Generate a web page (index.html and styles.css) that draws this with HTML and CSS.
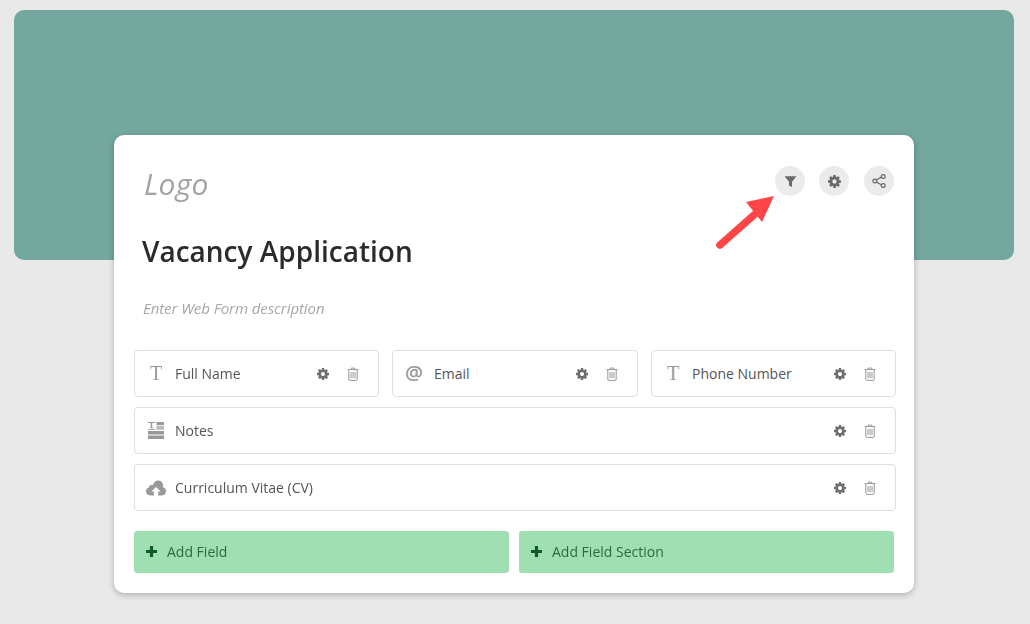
FILE: index.html
```html
<!DOCTYPE html>
<html lang="en">
<head>
<meta charset="utf-8">
<title>Vacancy Application</title>
<link rel="stylesheet" href="styles.css">
</head>
<body>
<svg class="defs" width="0" height="0" aria-hidden="true">
  <symbol id="cog" viewBox="0 0 1792 1792"><path d="M1152 896q0-106-75-181t-181-75-181 75-75 181 75 181 181 75 181-75 75-181zm512-109v222q0 12-8 23t-20 13l-185 28q-19 54-39 91 35 50 107 138 10 12 10 25t-9 23q-27 37-99 108t-94 71q-12 0-26-9l-138-108q-44 23-91 38-16 136-29 186-7 28-36 28h-222q-14 0-24.500-8.500t-11.500-21.500l-28-184q-49-16-90-37l-141 107q-10 9-25 9-14 0-25-11-126-114-165-168-7-10-7-23 0-12 8-23 15-21 51-66.500t54-70.500q-27-50-41-99l-183-27q-13-2-21-12.500t-8-23.500v-222q0-12 8-23t19-13l186-28q14-46 39-92-40-57-107-138-10-12-10-24 0-10 9-23 26-36 98.500-107.500t94.500-71.500q13 0 26 10l138 107q44-23 91-38 16-136 29-186 7-28 36-28h222q14 0 24.500 8.500t11.500 21.500l28 184q49 16 90 37l142-107q9-9 24-9 13 0 25 10 129 119 165 170 7 8 7 22 0 12-8 23-15 21-51 66.500t-54 70.500q26 50 41 98l183 28q13 2 21 12.500t8 23.500z"/></symbol>
  <symbol id="trash" viewBox="0 0 12 14"><path d="M4.200 2V1.100h3.600V2M.6 2.600h10.800M1.800 2.600v9.600q0 1.200 1.200 1.200h6q1.200 0 1.200-1.200V2.600M4 5v6.200M6 5v6.200M8 5v6.200" fill="none" stroke="currentColor" stroke-width="1"/></symbol>
</svg>
<main class="page">
  <div class="banner"></div>
  <section class="card">
    <header class="head">
      <div class="logo">Logo</div>
      <div class="actions">
        <button class="round" aria-label="Filter"><svg class="i-filter" viewBox="0 0 12 12"><path d="M.5 1.200h11L7.400 6.300v4.800L4.600 9.700V6.300z"/></svg></button>
        <button class="round" aria-label="Settings"><svg class="i-cog-lg"><use href="#cog"/></svg></button>
        <button class="round" aria-label="Share"><svg class="i-share" viewBox="0 0 14 14"><path d="M4.300 6 9.700 3M4.300 8l5.400 3"/><circle cx="2.800" cy="7" r="1.900"/><circle cx="11.200" cy="2.500" r="1.900"/><circle cx="11.200" cy="11.500" r="1.900"/></svg></button>
      </div>
    </header>
    <h1 class="title">Vacancy Application</h1>
    <p class="desc">Enter Web Form description</p>
    <div class="fields">
      <div class="field">
        <span class="ficon serif">T</span><span class="name">Full Name</span>
        <svg class="gear"><use href="#cog"/></svg><svg class="bin"><use href="#trash"/></svg>
      </div>
      <div class="field">
        <span class="ficon at">@</span><span class="name">Email</span>
        <svg class="gear"><use href="#cog"/></svg><svg class="bin"><use href="#trash"/></svg>
      </div>
      <div class="field">
        <span class="ficon serif">T</span><span class="name">Phone Number</span>
        <svg class="gear"><use href="#cog"/></svg><svg class="bin"><use href="#trash"/></svg>
      </div>
      <div class="field wide">
        <span class="ficon"><svg class="i-notes" viewBox="0 0 16 17"><path d="M0 0h7v1H4.200v4.600H5.400v.7H1.600v-.7h1.200V1H0zM0 7h7.200v.8H0z"/><path d="M8.500 0H16v3.200H8.500z"/><path class="soft" d="M8.500 4H16v3.800H8.500z"/><path d="M0 9h16v3.500H0zM0 13.500h16V17H0z"/></svg></span><span class="name">Notes</span>
        <svg class="gear"><use href="#cog"/></svg><svg class="bin"><use href="#trash"/></svg>
      </div>
      <div class="field wide">
        <span class="ficon"><svg class="i-cloud" viewBox="0 0 20 16"><path d="M4.500 15.500Q0 15.300 0 11.300q0-2.900 2.800-3.900Q3 5 5.400 5q.8 0 1.400.3Q8.300.6 12 .6q4.300 0 5 4.500 0 1-.2 1.800 3.200 1 3.200 4.400 0 4-4.500 4.200h-3.300v-4h2.500L10 6.900 5.300 11.500h2.600v4z"/></svg></span><span class="name">Curriculum Vitae (CV)</span>
        <svg class="gear"><use href="#cog"/></svg><svg class="bin"><use href="#trash"/></svg>
      </div>
    </div>
    <div class="adds">
      <button class="add"><svg class="plus" viewBox="0 0 11 11"><path d="M3.900 0h3.200v3.900H11v3.200H7.100V11H3.900V7.100H0V3.900h3.900z"/></svg>Add Field</button>
      <button class="add"><svg class="plus" viewBox="0 0 11 11"><path d="M3.900 0h3.200v3.900H11v3.200H7.100V11H3.900V7.100H0V3.900h3.900z"/></svg>Add Field Section</button>
    </div>
    <svg class="arrow" viewBox="0 0 62 60"><path d="M6 51 40 21" stroke="#ff4545" stroke-width="7.500" stroke-linecap="round" fill="none"/><path d="M60 2 32 8 48 28z" fill="#ff4545"/></svg>
  </section>
</main>
</body>
</html>
```

FILE: styles.css
```css
* { box-sizing: border-box; }
html, body { margin: 0; height: 100%; }
body {
  background: #e9e9e9;
  font-family: "Open Sans", "Liberation Sans", sans-serif;
  color: #555;
  overflow: hidden;
}
.defs { position: absolute; }
.page { padding: 10px 16px 0 14px; }
.banner { height: 250px; background: #74a89f; border-radius: 10px; }
.card {
  position: relative;
  height: 458px;
  margin: -125px 100px 0;
  padding: 31px 18px 0 20px;
  background: #fff;
  border-radius: 10px;
  box-shadow: 0 2px 6px rgba(0, 0, 0, .25);
  will-change: opacity;
}
.head { display: flex; justify-content: space-between; height: 30px; padding: 0 2px 0 10px; }
.logo { font-size: 30px; font-style: italic; line-height: 35px; letter-spacing: .2px; color: #a3a3a3; }
.actions { display: flex; gap: 14px; }
.round {
  display: flex; align-items: center; justify-content: center;
  width: 30px; height: 30px; padding: 0; border: 0;
  border-radius: 50%; background: #ebebeb; color: #666;
}
.round:last-child { margin-left: 1px; }
.round svg { fill: #6a6a6a; }
.i-filter { width: 13px; height: 13px; }
.i-cog-lg { width: 15px; height: 15px; }
.round .i-share { width: 14px; height: 14px; fill: #ebebeb; stroke: #666; stroke-width: 1.2; }
.title { margin: 34px 0 0 8px; font-size: 28px; font-weight: 600; line-height: 42px; color: #2b2b2b; }
.desc { margin: 26px 0 0 9px; font-size: 15px; font-style: italic; line-height: 20px; letter-spacing: -.08px; color: #a8a8a8; }
.fields { display: grid; grid-template-columns: 245px 246px 245px; gap: 10px 13px; margin-top: 32px; }
.field {
  display: flex; align-items: center; height: 47px; padding: 0 19px 0 12px;
  background: #fff; border: 1px solid #dedede; border-radius: 4px;
}
.wide { grid-column: 1 / -1; }
.ficon { display: flex; flex: none; align-items: center; justify-content: center; width: 18px; margin-right: 10px; color: #999; }
.serif { font-family: "Liberation Serif", serif; font-size: 20px; }
.at { font-size: 20px; font-weight: 600; line-height: 20px; margin: -1px 11px 0 0; }
.name { flex: 1; font-size: 14px; color: #555; }
.gear { width: 14px; height: 14px; fill: #6e6e6e; margin-right: 17px; }
.bin { width: 12px; height: 14px; color: #999; }
.i-notes { width: 16px; height: 17px; fill: #999; flex: none; }
.soft { fill: #bbb; }
.i-cloud { width: 20px; height: 16px; fill: #999; flex: none; }
.adds { display: flex; gap: 10px; margin-top: 20px; }
.add {
  display: flex; align-items: center; width: 375px; height: 42px; padding: 0 12px 2px;
  border: 0; border-radius: 3px; background: #9fdfb2;
  font: 14px "Open Sans", "Liberation Sans", sans-serif; color: #2c6a40;
}
.plus { width: 11px; height: 11px; margin-right: 10px; fill: #0f5a26; }
.arrow { position: absolute; left: 600px; top: 59px; width: 62px; height: 60px; }
```
